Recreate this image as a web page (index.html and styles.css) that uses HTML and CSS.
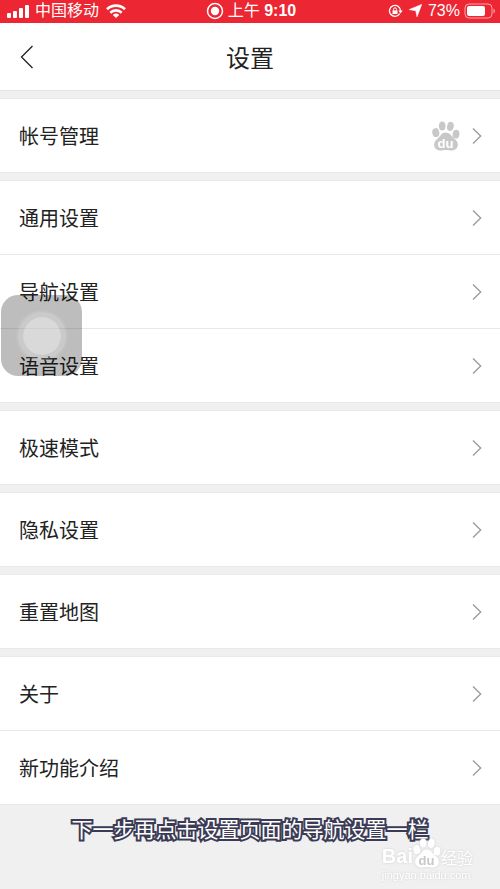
FILE: index.html
```html
<!DOCTYPE html>
<html lang="zh-CN">
<head>
<meta charset="utf-8">
<meta name="viewport" content="width=device-width, initial-scale=1">
<title>设置</title>
<link rel="stylesheet" href="styles.css">
</head>
<body>
<svg class="defs" width="0" height="0" aria-hidden="true">
  <symbol id="chevron" viewBox="0 0 10 18"><path d="M1 1.5 8.700 9 1 16.500" fill="none" stroke="currentColor" stroke-width="1.300"/></symbol>
  <symbol id="paw" viewBox="0 0 28 30">
    <ellipse cx="3.800" cy="11.600" rx="3.500" ry="4.500" transform="rotate(-10 3.800 11.600)"/>
    <ellipse cx="10.200" cy="5" rx="3.300" ry="4.600"/>
    <ellipse cx="18.400" cy="5.400" rx="3.300" ry="4.600" transform="rotate(12 18.400 5.400)"/>
    <ellipse cx="24" cy="13.200" rx="3.400" ry="4.400" transform="rotate(8 24 13.200)"/>
    <path d="M13.500 11.500c4 0 5.500 3 7.800 5.200 2.800 2.400 5 4.300 4.500 7.800-.6 4-4.300 5.300-7.500 4.900-3-.4-5.600-.4-8.600 0-3.600.4-7-1-7.500-4.900-.4-3.500 1.700-5.400 4.300-7.800 2.400-2.200 3.500-5.200 7-5.200z"/>
  </symbol>
</svg>

<div class="status">
  <div class="status-left">
    <svg width="24" height="16" viewBox="0 0 24 16" fill="#fff"><rect x="0" y="10" width="4" height="5" rx="1"/><rect x="6" y="8" width="4" height="7" rx="1"/><rect x="12" y="5" width="4" height="10" rx="1"/><rect x="18" y="2" width="4" height="13" rx="1"/></svg>
    <span>中国移动</span>
    <svg width="20" height="16" viewBox="0 0 20 16" fill="none" stroke="#fff" stroke-width="2.600"><path d="M1 6.200a13 13 0 0 1 18 0M4.300 9.700a8.200 8.200 0 0 1 11.400 0"/><path d="M10 15 6.800 11.900a4.600 4.600 0 0 1 6.400 0z" fill="#fff" stroke="none"/></svg>
  </div>
  <div class="status-center">
    <svg width="18" height="18" viewBox="0 0 18 18"><circle cx="9" cy="9" r="7.500" fill="none" stroke="#fff" stroke-width="1.500"/><circle cx="9" cy="9" r="4.200" fill="#fff"/></svg>
    <span>上午 <b>9:10</b></span>
  </div>
  <div class="status-right">
    <svg width="15" height="14" viewBox="0 0 15 14"><path d="M11.700 9.700A5.500 5.500 0 1 1 12.500 7" fill="none" stroke="#fff" stroke-width="1.300"/><path d="M10.300 6.500h4.400L12.500 9.500z" fill="#fff"/><rect x="4.500" y="6.300" width="5" height="3.700" fill="#fff"/><path d="M5.500 6.500V5.300a1.500 1.500 0 0 1 3 0v1.200" fill="none" stroke="#fff"/></svg>
    <svg class="arrow" width="13" height="13" viewBox="0 0 13 13"><path d="M12.700.4 8 12.800 6.800 6.800.2 5.600z" fill="#fff" stroke="#fff" stroke-width=".6" stroke-linejoin="round"/></svg>
    <span>73%</span>
    <svg width="31" height="16" viewBox="0 0 31 16"><rect x="1" y="1" width="27" height="14" rx="4" fill="none" stroke="#fff" stroke-opacity=".6"/><rect x="3" y="3" width="18" height="10" rx="2" fill="#fff"/><path d="M29.500 5.500c1.800.8 1.800 4.200 0 5z" fill="#fff" fill-opacity=".6"/></svg>
  </div>
</div>

<header class="header">
  <button class="back" aria-label="返回"><svg width="14" height="24" viewBox="0 0 14 24"><path d="M12.500 1 1.500 12l11 11" fill="none" stroke="#222" stroke-width="1.300"/></svg></button>
  <h1>设置</h1>
</header>

<main class="settings">
  <section class="group">
    <a class="row" href="#account"><span>帐号管理</span>
      <svg class="paw" width="28" height="30" viewBox="0 0 28 30"><use href="#paw"/><text x="13.500" y="27" text-anchor="middle">du</text></svg>
      <svg class="chevron"><use href="#chevron"/></svg></a>
  </section>
  <section class="group">
    <a class="row" href="#general"><span>通用设置</span><svg class="chevron"><use href="#chevron"/></svg></a>
    <a class="row" href="#navigation"><span>导航设置</span><svg class="chevron"><use href="#chevron"/></svg></a>
    <a class="row" href="#voice"><span>语音设置</span><svg class="chevron"><use href="#chevron"/></svg></a>
  </section>
  <section class="group">
    <a class="row" href="#fast"><span>极速模式</span><svg class="chevron"><use href="#chevron"/></svg></a>
  </section>
  <section class="group">
    <a class="row" href="#privacy"><span>隐私设置</span><svg class="chevron"><use href="#chevron"/></svg></a>
  </section>
  <section class="group">
    <a class="row" href="#reset"><span>重置地图</span><svg class="chevron"><use href="#chevron"/></svg></a>
  </section>
  <section class="group">
    <a class="row" href="#about"><span>关于</span><svg class="chevron"><use href="#chevron"/></svg></a>
    <a class="row" href="#new"><span>新功能介绍</span><svg class="chevron"><use href="#chevron"/></svg></a>
  </section>
</main>

<button class="assist" aria-label="辅助触控"><span class="ring"></span></button>
<p class="caption">下一步再点击设置页面的导航设置一栏</p>
<div class="watermark">
  <div class="brand"><b>Bai</b><svg class="mark" width="28" height="30" viewBox="0 0 28 30"><use href="#paw"/><text x="13.500" y="27" text-anchor="middle">du</text></svg><span>经验</span></div>
  <div class="site">jingyan.baidu.com</div>
</div>
</body>
</html>
```
FILE: styles.css
```css
* { box-sizing: border-box; }
body {
  margin: 0;
  min-height: 100vh;
  position: relative;
  overflow-x: hidden;
  background: #f0f0f0;
  color: #222;
  font-family: "Noto Sans CJK SC", sans-serif;
}
button { padding: 0; border: 0; background: none; }
svg { display: block; flex: none; }
.defs { position: absolute; }

.status {
  display: grid;
  grid-template-columns: 1fr auto 1fr;
  align-items: center;
  height: 23px;
  padding: 0 5px 2px 7px;
  background: #ec2632;
  color: #fff;
  font-family: "Liberation Sans", "Noto Sans CJK SC", sans-serif;
  font-size: 16px;
  line-height: 20px;
}
.status-left, .status-center, .status-right { display: flex; align-items: center; gap: 4px; }
.status-left span { margin-right: 3px; }
.status-right { justify-content: flex-end; }
.status-right .arrow { margin: 0 2px; }
.status b { font-weight: 700; }

.header {
  display: grid;
  grid-template-columns: 60px 1fr 60px;
  align-items: center;
  height: 68px;
  background: #fff;
  border-bottom: 1px solid #e2e2e2;
}
.back { display: flex; align-items: center; height: 100%; padding-left: 20px; }
.header h1 { margin: 0; text-align: center; font-size: 24px; font-weight: 400; line-height: 36px; }

.settings { display: grid; gap: 9px; padding-top: 8px; }
.group { background: #fff; box-shadow: 0 0 0 1px #e9e9e9; }
.row {
  display: flex;
  align-items: center;
  gap: 12px;
  height: 73px;
  padding: 0 18px 0 19px;
  color: #222;
  font-size: 20px;
  line-height: 30px;
  text-decoration: none;
}
.row + .row { height: 74px; border-top: 1px solid #e8e8e8; }
.row > span { flex: 1; }
.chevron { width: 10px; height: 18px; color: #999; }
.paw { fill: #c8c8c8; }
.paw text { fill: #fff; font: 700 13px "Liberation Sans", sans-serif; }

.assist {
  position: absolute;
  top: 295px;
  left: 1px;
  display: grid;
  place-items: center;
  width: 81px;
  height: 81px;
  border-radius: 17px;
  background: rgba(0, 0, 0, 0.26);
}
.ring {
  width: 38px;
  height: 38px;
  border-radius: 50%;
  background: rgba(255, 255, 255, 0.42);
  box-shadow: 0 0 0 5px rgba(255, 255, 255, 0.14), 0 0 0 7px rgba(255, 255, 255, 0.08);
}

.caption {
  margin: 8px 0 0;
  text-align: center;
  color: #fff;
  font-size: 21px;
  font-weight: 400;
  line-height: 32px;
  -webkit-text-stroke: 4px #3b3b55;
  paint-order: stroke fill;
}
.watermark {
  position: absolute;
  right: 27px;
  bottom: 7px;
  color: #fff;
  filter: drop-shadow(0 0 1px #d0d0d0);
}
.brand { display: flex; align-items: center; font-size: 16px; line-height: 20px; }
.brand b { padding-top: 6px; font: 700 20px "Liberation Sans", sans-serif; }
.brand span { padding-top: 8px; }
.mark { fill: #fff; }
.mark text { fill: #c8c8c8; font: 700 13px "Liberation Sans", sans-serif; }
.site { font: 11px/14px "Liberation Sans", sans-serif; }
```
